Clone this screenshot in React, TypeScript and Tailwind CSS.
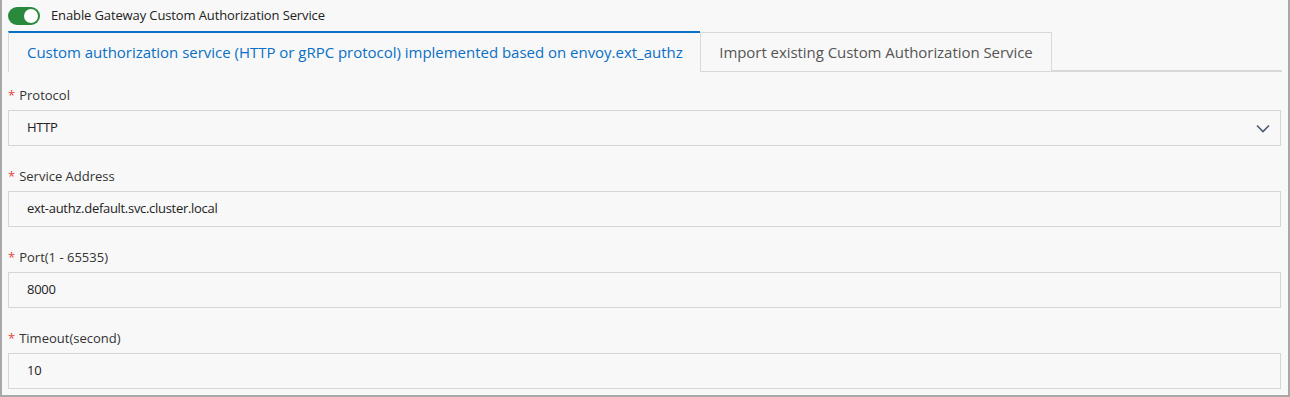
import React from 'react';

function Field({ label, value, select }: { label: string; value: string; select?: boolean }) {
  return (
    <div className="flex flex-col">
      <div className="h-[38px] pt-[6px] text-[13px] leading-[20px] text-[#333] flex items-end pb-[5px]">
        <span className="text-[#e8453c] mr-[4px]">*</span>
        {label}
      </div>
      <div className="h-[36px] border border-[#d6d6d6] flex items-center justify-between pl-[18px] pr-[8px] text-[13px] text-[#222] tracking-[-0.3px]">
        <span>{value}</span>
        {select && (
          <svg width="18" height="18" viewBox="0 0 18 18" fill="none">
            <path d="M3 6.5l6 6 6-6" stroke="#4a5a6e" strokeWidth="1.6" />
          </svg>
        )}
      </div>
    </div>
  );
}

export default function App() {
  return (
    <div
      className="w-[1290px] h-[397px] bg-[#f8f8f8] border-l-2 border-r-2 border-b-2 border-[#a8a8a8] overflow-hidden"
      style={{ fontFamily: '"Open Sans", "Noto Sans", sans-serif' }}
    >
      <div className="pl-[6px] pr-[6px]">
        {/* toggle row */}
        <div className="h-[31px] flex items-center gap-[11px] pt-[1px]">
          <div className="w-[32px] h-[18px] rounded-full bg-[#2a8a3c] relative">
            <div className="absolute right-[2px] top-[2px] w-[14px] h-[14px] rounded-full bg-white" />
          </div>
          <span className="text-[13px] text-[#222] tracking-[-0.12px]">Enable Gateway Custom Authorization Service</span>
        </div>

        {/* tabs */}
        <div className="flex h-[41px]">
          <div className="w-[692px] border-t-2 border-t-[#0a6fc6] border-l border-l-[#d8d8d8] flex items-center pl-[18px] text-[15px] text-[#0a6fc6] tracking-[-0.02px]">
            Custom authorization service (HTTP or gRPC protocol) implemented based on envoy.ext_authz
          </div>
          <div className="w-[352px] mt-[1px] border border-[#d8d8d8] flex items-center justify-center text-[15px] text-[#555] tracking-[-0.05px]">
            Import existing Custom Authorization Service
          </div>
          <div className="flex-1 border-b-2 border-[#d8d8d8]" />
        </div>

        {/* form */}
        <div className="flex flex-col gap-[7px] pr-[1px]">
          <Field label="Protocol" value="HTTP" select />
          <Field label="Service Address" value="ext-authz.default.svc.cluster.local" />
          <Field label="Port(1 - 65535)" value="8000" />
          <Field label="Timeout(second)" value="10" />
        </div>
      </div>
    </div>
  );
}
